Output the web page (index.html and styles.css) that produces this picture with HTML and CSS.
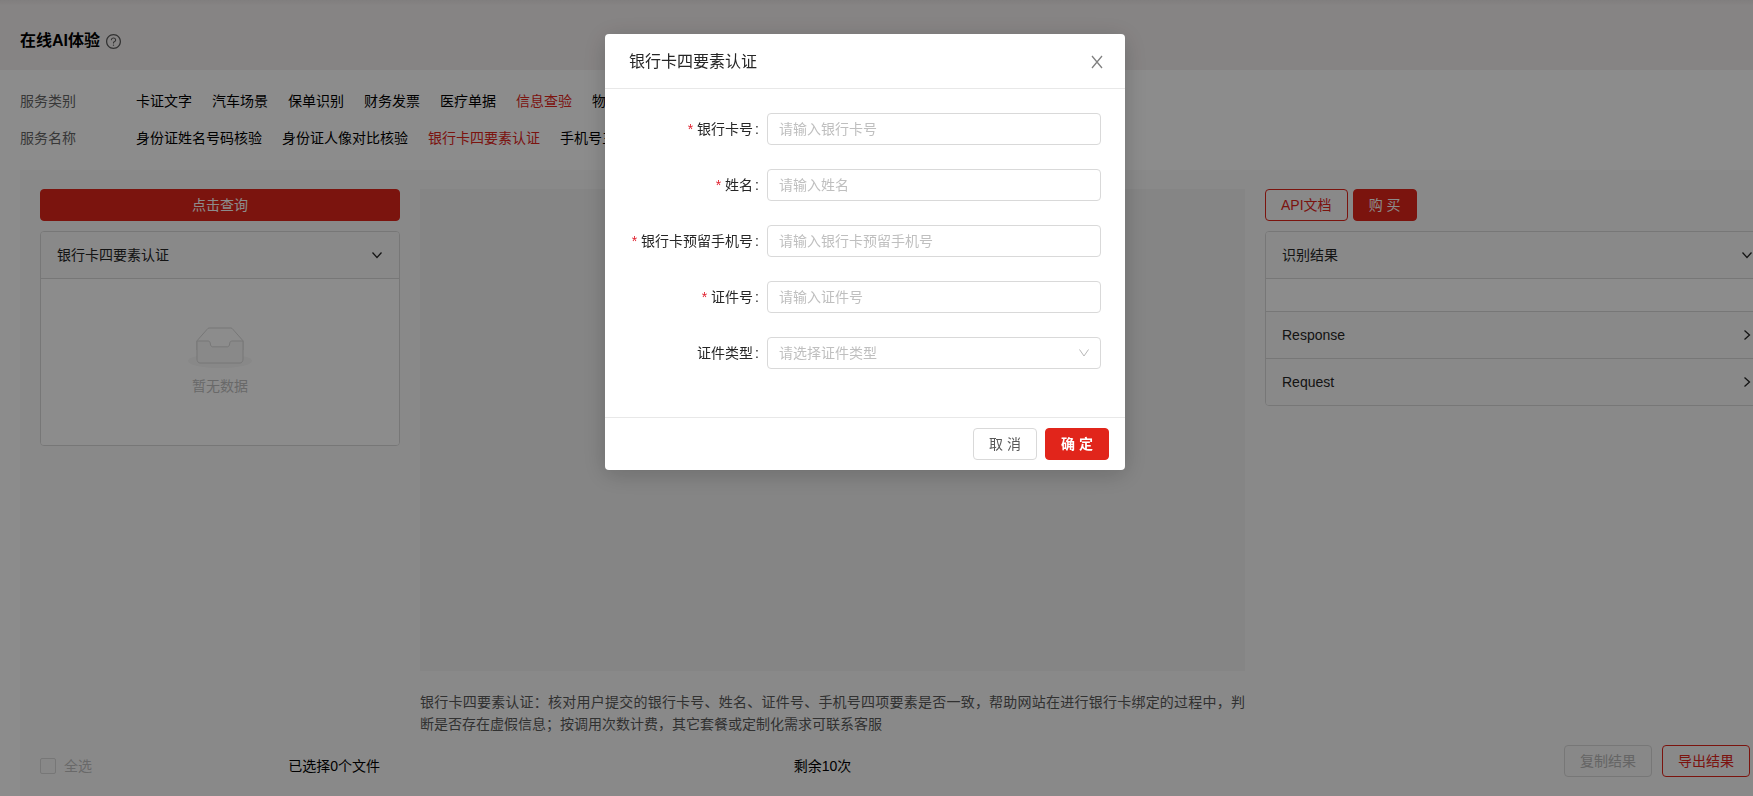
FILE: index.html
```html
<!DOCTYPE html>
<html lang="zh-CN">
<head>
<meta charset="utf-8">
<title>在线AI体验</title>
<link rel="stylesheet" href="styles.css">
</head>
<body>
<header class="page-head">
  <h1 class="page-title">在线AI体验</h1>
  <svg class="help" viewBox="64 64 896 896"><path d="M512 64C264.600 64 64 264.600 64 512s200.600 448 448 448 448-200.600 448-448S759.400 64 512 64zm0 820c-205.400 0-372-166.600-372-372s166.600-372 372-372 372 166.600 372 372-166.600 372-372 372z"/><path d="M623.600 316.700C593.600 290.400 554 276 512 276s-81.600 14.500-111.600 40.700C369.200 344 352 380.700 352 420v7.600c0 4.400 3.600 8 8 8h48c4.400 0 8-3.600 8-8V420c0-44.100 43.100-80 96-80s96 35.900 96 80c0 31.100-22 59.600-56.100 72.700-21.200 8.100-39.200 22.300-52.100 40.900-13.100 19-19.900 41.800-19.900 64.900V620c0 4.400 3.600 8 8 8h48c4.400 0 8-3.600 8-8v-22.700a48.300 48.300 0 0 1 30.900-44.800c59-22.700 97.100-74.700 97.100-132.500.1-39.300-17.100-76-48.300-103.300zM472 732a40 40 0 1 0 80 0 40 40 0 1 0-80 0z"/></svg>
</header>

<nav class="filters">
  <div class="filter-row">
    <span class="filter-name">服务类别</span>
    <a class="filter-link" href="#">卡证文字</a>
    <a class="filter-link" href="#">汽车场景</a>
    <a class="filter-link" href="#">保单识别</a>
    <a class="filter-link" href="#">财务发票</a>
    <a class="filter-link" href="#">医疗单据</a>
    <a class="filter-link active" href="#">信息查验</a>
    <a class="filter-link" href="#">物</a>
  </div>
  <div class="filter-row">
    <span class="filter-name">服务名称</span>
    <a class="filter-link" href="#">身份证姓名号码核验</a>
    <a class="filter-link" href="#">身份证人像对比核验</a>
    <a class="filter-link active" href="#">银行卡四要素认证</a>
    <a class="filter-link" href="#">手机号三</a>
  </div>
</nav>

<main class="workspace">
  <section class="col">
    <button class="btn primary block" type="button">点击查询</button>
    <div class="panel">
      <button class="panel-head" type="button">银行卡四要素认证
        <svg class="arrow" viewBox="0 0 12 12"><path d="M1.500 3.500 6 8.500l4.500-5"/></svg>
      </button>
      <div class="empty">
        <svg class="empty-art" viewBox="0 0 64 41"><g transform="translate(0 1)" fill="none" fill-rule="evenodd"><ellipse fill="#f7f7f7" cx="32" cy="33" rx="32" ry="7"/><g stroke="#d9d9d9"><path d="M55 12.760 44.854 1.258C44.367.474 43.656 0 42.907 0H21.093c-.749 0-1.460.474-1.947 1.257L9 12.761V22h46v-9.240z"/><path d="M41.613 15.931c0-1.605.994-2.930 2.227-2.931H55v18.137C55 33.260 53.680 35 52.050 35h-40.100C10.320 35 9 33.259 9 31.137V13h11.160c1.233 0 2.227 1.323 2.227 2.928v.022c0 1.605 1.005 2.901 2.237 2.901h14.752c1.232 0 2.237-1.308 2.237-2.913v-.007z" fill="#fafafa"/></g></g></svg>
        <p class="empty-text">暂无数据</p>
      </div>
    </div>
    <div class="col-foot">
      <label class="check"><input type="checkbox" disabled>全选</label>
      <span class="picked">已选择0个文件</span>
    </div>
  </section>

  <section class="col">
    <div class="preview"></div>
    <p class="desc">银行卡四要素认证：核对用户提交的银行卡号、姓名、证件号、手机号四项要素是否一致，帮助网站在进行银行卡绑定的过程中，判断是否存在虚假信息；按调用次数计费，其它套餐或定制化需求可联系客服</p>
    <div class="col-foot centered">剩余10次</div>
  </section>

  <section class="col">
    <div class="actions">
      <button class="btn outline" type="button">API文档</button>
      <button class="btn primary" type="button">购 买</button>
    </div>
    <div class="panel">
      <button class="panel-head" type="button">识别结果
        <svg class="arrow" viewBox="0 0 12 12"><path d="M1.500 3.500 6 8.500l4.500-5"/></svg>
      </button>
      <div class="panel-gap"></div>
      <button class="panel-head" type="button">Response
        <svg class="arrow" viewBox="0 0 12 12"><path d="M3.500 1.500 8.500 6l-5 4.500"/></svg>
      </button>
      <button class="panel-head" type="button">Request
        <svg class="arrow" viewBox="0 0 12 12"><path d="M3.500 1.500 8.500 6l-5 4.500"/></svg>
      </button>
    </div>
    <div class="exports">
      <button class="btn muted" type="button" disabled>复制结果</button>
      <button class="btn outline" type="button">导出结果</button>
    </div>
  </section>
</main>

<div class="mask">
  <form class="modal" role="dialog" aria-labelledby="modal-title">
    <div class="modal-head">
      <h2 class="modal-title" id="modal-title">银行卡四要素认证</h2>
      <button class="close" type="button" aria-label="关闭"><svg viewBox="0 0 16 16"><path d="M3 2l10 12M13 2 3 14"/></svg></button>
    </div>
    <div class="modal-body">
      <div class="field"><label class="required" for="card">银行卡号</label><input id="card" type="text" placeholder="请输入银行卡号"></div>
      <div class="field"><label class="required" for="name">姓名</label><input id="name" type="text" placeholder="请输入姓名"></div>
      <div class="field"><label class="required" for="phone">银行卡预留手机号</label><input id="phone" type="text" placeholder="请输入银行卡预留手机号"></div>
      <div class="field"><label class="required" for="cert">证件号</label><input id="cert" type="text" placeholder="请输入证件号"></div>
      <div class="field"><label for="kind">证件类型</label>
        <div class="select">
          <select id="kind"><option>请选择证件类型</option></select>
          <svg class="select-arrow" viewBox="0 0 12 12"><path d="M1.500 2.500 6 9l4.500-6.500"/></svg>
        </div>
      </div>
    </div>
    <div class="modal-foot">
      <button class="btn plain" type="button">取 消</button>
      <button class="btn primary bold" type="submit">确 定</button>
    </div>
  </form>
</div>
</body>
</html>
```
FILE: styles.css
```css
* { box-sizing: border-box; }

body {
  margin: 0;
  min-height: 100vh;
  display: flex;
  flex-direction: column;
  overflow: hidden;
  background: #fff;
  color: #000;
  font: 14px/22px "Liberation Sans", "Noto Sans CJK SC", sans-serif;
}

h1, h2, p { margin: 0; }
button, input, select { font: inherit; color: inherit; }

.page-head {
  display: flex;
  align-items: center;
  gap: 6px;
  height: 70px;
  padding: 12px 20px 0;
  background: linear-gradient(#eae6e6, #f5f1f1 6px);
}
.page-title { font-size: 16px; line-height: 24px; font-weight: 700; }
.help { width: 15px; height: 15px; fill: #5c5c5c; }

.filters {
  display: flex;
  flex-direction: column;
  gap: 15px;
  padding: 20px 20px 21px;
}
.filter-row { display: flex; gap: 20px; white-space: nowrap; }
.filter-name { width: 96px; color: #666; }
.filter-link { color: #000; text-decoration: none; }
.filter-link.active { color: #e1251b; }

/* The right column runs past the window edge. */
.workspace {
  flex: 1;
  display: grid;
  grid-template-columns: 360px 1fr 505px;
  gap: 20px;
  margin: 0 -37px 0 20px;
  padding: 19px 20px;
  background: #fafafa;
}
.col { display: flex; flex-direction: column; min-width: 0; }

.btn {
  height: 32px;
  min-width: 64px;
  padding: 0 15px;
  border: 1px solid #d9d9d9;
  border-radius: 4px;
  background: #fff;
  white-space: nowrap;
}
.btn.primary { background: #e1251b; border-color: #e1251b; color: #fff; }
.btn.outline { background: transparent; border-color: #e1251b; color: #e1251b; }
.btn.muted { background: #f7f7f7; color: #b8b8b8; }
.btn.plain { color: #595959; }
.btn.bold { font-weight: 700; }
.btn.block { width: 100%; }

.panel {
  margin-top: 10px;
  border: 1px solid #d9d9d9;
  border-radius: 4px;
  overflow: hidden;
}
.panel-head {
  display: flex;
  align-items: center;
  justify-content: space-between;
  width: 100%;
  height: 46px;
  padding: 0 16px;
  border: 0;
  background: #fafafa;
  color: #262626;
}
.panel-head + *, .panel-gap + * { border-top: 1px solid #d9d9d9; height: 47px; }
.panel-gap.panel-gap { height: 33px; background: #fff; }
.arrow { width: 12px; height: 12px; fill: none; stroke: #262626; stroke-width: 1.3; }

.panel .empty {
  display: flex;
  flex-direction: column;
  align-items: center;
  height: auto;
  padding: 48px 0;
  background: #fff;
}
.empty-art { width: 64px; height: 41px; }
.empty-text { margin-top: 7px; color: #bfbfbf; }

.col-foot {
  display: flex;
  align-items: center;
  justify-content: space-between;
  margin-top: auto;
  padding-right: 20px;
}
.col-foot.centered { justify-content: center; }
.check { display: flex; align-items: center; gap: 8px; color: #bfbfbf; }
.check input {
  appearance: none;
  width: 16px;
  height: 16px;
  margin: 0;
  border: 1px solid #d9d9d9;
  border-radius: 2px;
  background: #f7f7f7;
}

.preview { height: 482px; background: #f2f2f2; }
.desc { margin-top: 20px; color: #595959; text-align: justify; }

.actions { display: flex; gap: 5px; }
.exports {
  display: flex;
  justify-content: flex-end;
  gap: 10px;
  margin-top: auto;
  padding-right: 20px;
}

.mask {
  position: fixed;
  inset: 0;
  padding: 34px 23px 0 0;
  background: rgba(0, 0, 0, 0.45);
}
.modal {
  width: 520px;
  margin: 0 auto;
  background: #fff;
  border-radius: 4px;
  box-shadow: 0 4px 24px rgba(0, 0, 0, 0.2);
  color: #262626;
}
.modal-head {
  display: flex;
  align-items: center;
  justify-content: space-between;
  height: 55px;
  padding: 2px 20px 0 24px;
  border-bottom: 1px solid #e8e8e8;
}
.modal-title { font-size: 16px; line-height: 22px; font-weight: 400; }
.close { display: flex; padding: 0; border: 0; background: none; }
.close svg { width: 16px; height: 16px; fill: none; stroke: #808080; stroke-width: 1.3; }

.modal-body { padding: 24px 24px 48px; display: grid; gap: 24px; }
.field { display: grid; grid-template-columns: 138px 1fr; align-items: center; }
.field label { padding-right: 8px; text-align: right; white-space: nowrap; }
.field label::after { content: ":"; margin-left: 2px; }
.field .required::before { content: "*"; margin-right: 4px; color: #e0202e; }
.field input, .field select {
  width: 100%;
  height: 32px;
  padding: 0 11px;
  border: 1px solid #d9d9d9;
  border-radius: 4px;
  background: #fff;
}
.field input::placeholder, .field select { color: #bfbfbf; }
.select { position: relative; display: flex; }
.select select { appearance: none; }
.select-arrow {
  position: absolute;
  right: 11px;
  top: 10px;
  width: 12px;
  height: 12px;
  fill: none;
  stroke: #b8b8b8;
  pointer-events: none;
}

.modal-foot {
  display: flex;
  justify-content: flex-end;
  gap: 8px;
  padding: 10px 16px;
  border-top: 1px solid #e8e8e8;
}
```
